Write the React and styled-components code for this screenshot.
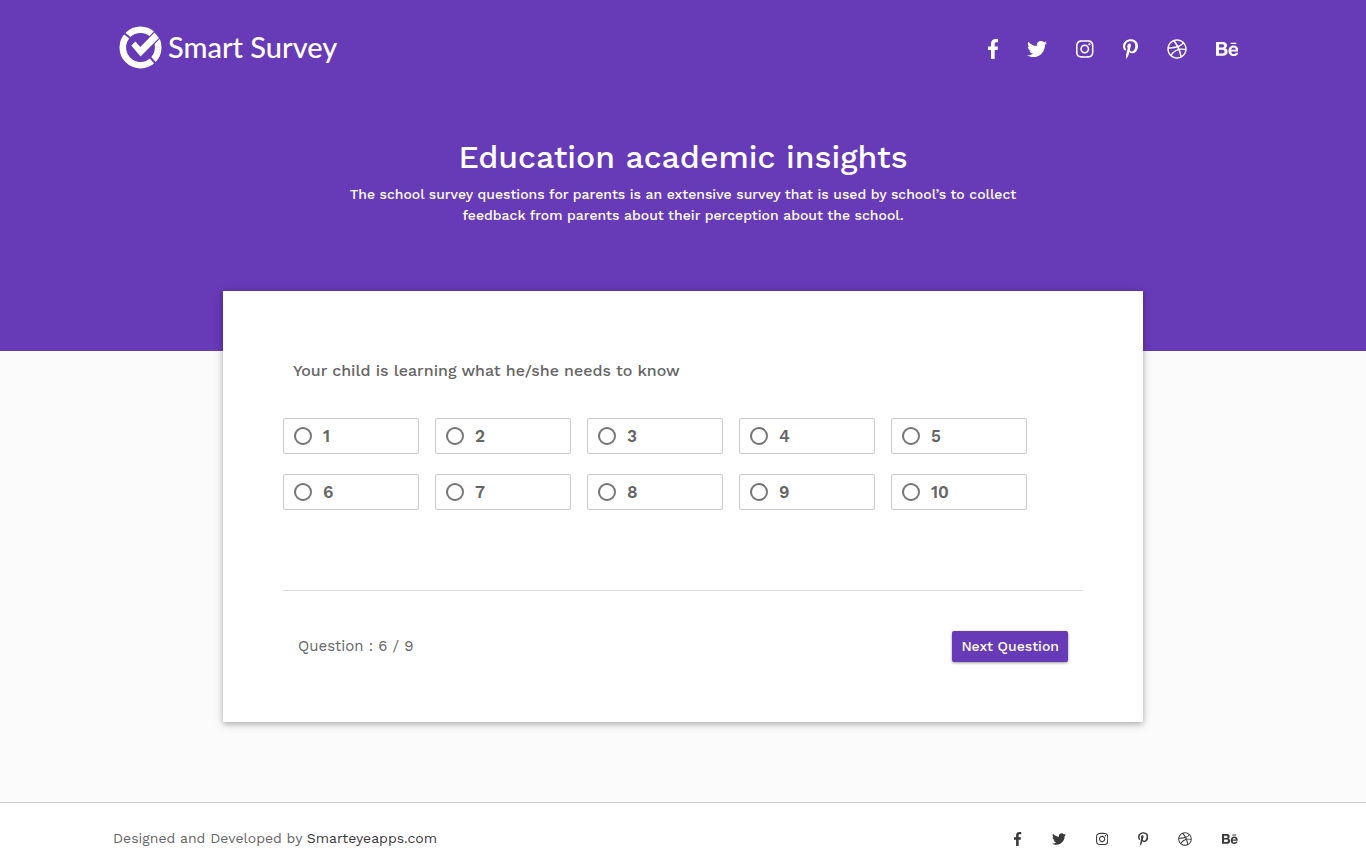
import React, { useState } from "react";
import styled, { createGlobalStyle } from "styled-components";
import {
  FaTwitter,
  FaInstagram,
  FaPinterestP,
  FaDribbble,
  FaBehance,
} from "react-icons/fa";

const purple = "#673ab7";

const GlobalStyle = createGlobalStyle`
  *, *::before, *::after { box-sizing: border-box; }
  body {
    margin: 0;
    background: #fbfbfb;
    color: #666;
    font-family: "Work Sans", Inter, "Open Sans", sans-serif;
    font-size: 14px;
    line-height: 21px;
  }
  h1, h2, p, ul { margin: 0; padding: 0; }
`;

const Container = styled.div`
  width: 100%;
  max-width: 1140px;
  margin: 0 auto;
  padding-right: 15px;
  display: flex;
  align-items: center;
  justify-content: space-between;
`;

const Hero = styled.header`
  background: ${purple};
  color: #fff;
  padding: 22px 0 125px;
`;

const Brand = styled.a`
  display: flex;
  align-items: center;
  gap: 6px;
  padding-left: 6px;
  color: #fff;
  text-decoration: none;
  font-family: Lato, sans-serif;
  font-size: 29px;
  font-weight: 500;
  line-height: 50px;
`;

const Mark = styled.svg`
  width: 43px;
  height: 43px;
`;

const HeroNav = styled.nav`
  padding-top: 4px;
`;

const SocialList = styled.ul`
  display: flex;
  align-items: center;
  gap: ${(p) => p.$gap};
  list-style: none;
  font-size: ${(p) => p.$size};
`;

const SocialLink = styled.a`
  display: flex;
  color: ${(p) => p.$color};

  svg {
    width: calc(1em * ${(p) => p.$units} / 512);
    height: 1em;
  }
`;

const Intro = styled.div`
  max-width: 720px;
  margin: 64px auto 0;
  text-align: center;
`;

const Title = styled.h1`
  font-size: 32px;
  line-height: 42px;
  font-weight: 500;
`;

const Lead = styled.p`
  padding: 6px 10px 0;
  font-weight: 500;
`;

const Card = styled.form`
  width: calc(100% - 32px);
  max-width: 920px;
  margin: -60px auto 80px;
  padding: 60px;
  background: #fff;
  box-shadow: 0 2px 5px rgba(0, 0, 0, 0.2), 0 2px 10px rgba(0, 0, 0, 0.16);
`;

const Question = styled.h2`
  padding: 8px 10px 0;
  font-size: 16px;
  line-height: 24px;
  font-weight: 500;
`;

const Answers = styled.div`
  display: grid;
  grid-template-columns: repeat(5, 17%);
  gap: 20px 2%;
  padding: 35px 0 80px;
`;

const Answer = styled.label`
  display: flex;
  align-items: center;
  gap: 11px;
  height: 36px;
  padding: 0 10px;
  border: 1px solid #ccc;
  border-radius: 2px;
  font-size: 17px;
  font-weight: 600;
  cursor: pointer;
`;

const Radio = styled.input`
  appearance: none;
  width: 18px;
  height: 18px;
  margin: 0;
  border: 2px solid #757575;
  border-radius: 50%;

  &:checked {
    border-color: ${purple};
    background: radial-gradient(${purple} 4px, transparent 5px);
  }
`;

const CardFooter = styled.div`
  display: flex;
  align-items: center;
  justify-content: space-between;
  padding: 40px 15px 0;
  border-top: 1px solid #ddd;
`;

const Progress = styled.p`
  font-size: 15px;
`;

const NextButton = styled.button`
  padding: 5px 9px;
  border: 0;
  border-radius: 2px;
  background: ${purple};
  color: #fff;
  font: inherit;
  font-weight: 500;
  box-shadow: 0 1px 3px rgba(0, 0, 0, 0.4);
  cursor: pointer;
`;

const PageFooter = styled.footer`
  padding: 25px 0 19px;
  border-top: 1px solid #ccc;
  background: #fff;
`;

const FooterLink = styled.a`
  color: #3a3a3a;
  text-decoration: none;
`;

function FacebookIcon() {
  return (
    <svg viewBox="0 0 264 512" fill="currentColor">
      <path d="M76.7 512V283H0v-91h76.7v-71.7C76.7 42.4 124.3 0 193.8 0c33.3 0 61.9 2.5 70.2 3.6V85h-48.2c-37.8 0-45.1 18-45.1 44.3V192H256l-11.7 91h-73.6v229" />
    </svg>
  );
}

// The number is the glyph's width on a 512-unit-high grid.
const networks = [
  ["Facebook", FacebookIcon, 264],
  ["Twitter", FaTwitter, 512],
  ["Instagram", FaInstagram, 448],
  ["Pinterest", FaPinterestP, 384],
  ["Dribbble", FaDribbble, 512],
  ["Behance", FaBehance, 576],
];

function Social({ size, gap, color }) {
  return (
    <SocialList $size={size} $gap={gap}>
      {networks.map(([name, Icon, units]) => (
        <li key={name}>
          <SocialLink href="#" aria-label={name} $color={color} $units={units}>
            <Icon />
          </SocialLink>
        </li>
      ))}
    </SocialList>
  );
}

function LogoMark() {
  return (
    <Mark viewBox="0 0 43 43" aria-hidden="true">
      <circle cx="21.5" cy="21.5" r="17.7" fill="none" stroke="#fff" strokeWidth="6.6" />
      <path d="M5 7 L13 13.5 M30 30 L37 38" stroke={purple} strokeWidth="2" />
      <path
        d="M12.3 19.5 L16.5 15.5 L21.3 21 L35.5 6.5 L40 12 L21.5 30.5 Z"
        fill="#fff"
        stroke={purple}
        strokeWidth="2.4"
        paintOrder="stroke"
      />
    </Mark>
  );
}

export default function App() {
  const [answer, setAnswer] = useState(null);

  return (
    <>
      <GlobalStyle />
      <Hero>
        <Container>
          <Brand href="#">
            <LogoMark />
            Smart Survey
          </Brand>
          <HeroNav>
            <Social size="20px" gap="29px" color="#fff" />
          </HeroNav>
        </Container>
        <Intro>
          <Title>Education academic insights</Title>
          <Lead>
            The school survey questions for parents is an extensive survey that is used by
            school’s to collect feedback from parents about their perception about the school.
          </Lead>
        </Intro>
      </Hero>
      <main>
        <Card onSubmit={(e) => e.preventDefault()}>
          <Question id="question">Your child is learning what he/she needs to know</Question>
          <Answers role="radiogroup" aria-labelledby="question">
            {Array.from({ length: 10 }, (_, i) => i + 1).map((n) => (
              <Answer key={n}>
                <Radio
                  type="radio"
                  name="answer"
                  value={n}
                  checked={answer === n}
                  onChange={() => setAnswer(n)}
                />
                {n}
              </Answer>
            ))}
          </Answers>
          <CardFooter>
            <Progress>Question : 6 / 9</Progress>
            <NextButton type="submit">Next Question</NextButton>
          </CardFooter>
        </Card>
      </main>
      <PageFooter>
        <Container>
          <p>
            Designed and Developed by <FooterLink href="#">Smarteyeapps.com</FooterLink>
          </p>
          <Social size="14px" gap="30px" color="#3a3a3a" />
        </Container>
      </PageFooter>
    </>
  );
}
